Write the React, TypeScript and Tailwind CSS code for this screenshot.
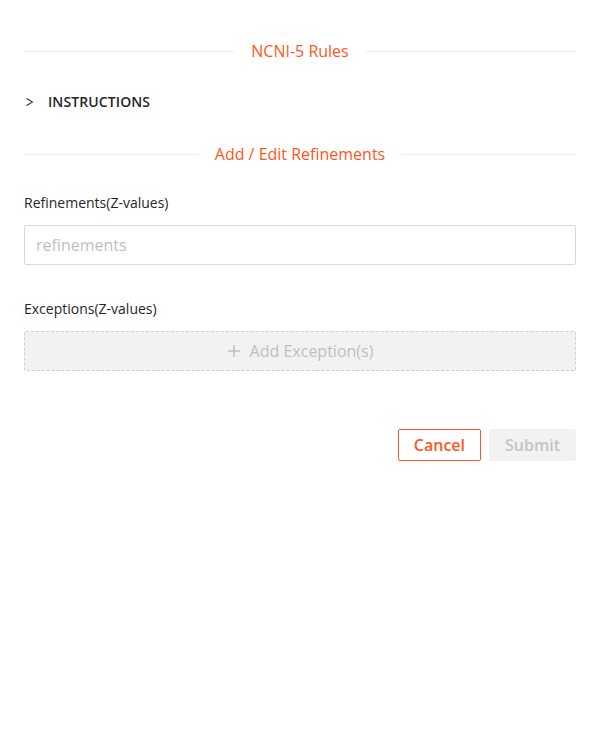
import React from "react";

function Divider({ title }: { title: string }) {
  return (
    <div className="flex items-center">
      <div className="flex-1 h-px bg-[#f0f0f0]" />
      <span className="px-4 text-[16px] leading-6 text-[#ff5722]">{title}</span>
      <div className="flex-1 h-px bg-[#f0f0f0]" />
    </div>
  );
}

export default function App() {
  return (
    <div className="bg-white w-full min-h-[731px] pl-6 pr-5 pt-[39px] text-[rgba(0,0,0,0.85)]" style={{ fontFamily: '"Open Sans", sans-serif' }}>
      <Divider title="NCNI-5 Rules" />
      <div className="flex items-center mt-[26px] h-[24px]">
        <svg width="12" height="12" viewBox="0 0 12 12" className="ml-0 mr-[12px] mt-[2px]" fill="none" stroke="#333" strokeWidth="1.1">
          <path d="M2.5 2.5 L8.5 6 L2.5 9.5" />
        </svg>
        <span className="text-[14px] font-semibold text-[#262626] tracking-[0.1px]">INSTRUCTIONS</span>
      </div>
      <div className="mt-[29px]">
        <Divider title="Add / Edit Refinements" />
      </div>
      <div className="mt-[26px] text-[14px] leading-[22px] text-[#262626]">Refinements(Z-values)</div>
      <input
        placeholder="refinements"
        className="mt-[11px] w-full h-[40px] border border-[#d9d9d9] rounded-[2px] px-[11px] text-[16px] placeholder:text-[#bfbfbf] outline-none"
      />
      <div className="mt-[33px] text-[14px] leading-[22px] text-[#262626]">Exceptions(Z-values)</div>
      <div className="mt-[11px] h-[40px] border border-dashed border-[#d0d0d0] bg-[#f2f2f2] rounded-[2px] flex items-center justify-center text-[16px] text-[#bfbfbf]">
        <svg width="14" height="14" viewBox="0 0 14 14" className="mr-[9px]" stroke="#bfbfbf" strokeWidth="1.5">
          <path d="M7 1 V13 M1 7 H13" />
        </svg>
        <span>Add Exception(s)</span>
      </div>
      <div className="flex justify-end gap-2 mt-[58px]">
        <button className="h-[32px] px-[15px] border border-[#ff5722] rounded-[2px] text-[#ff5722] text-[16px] font-semibold bg-white">Cancel</button>
        <button className="h-[32px] px-[15px] border border-[#f2f2f2] rounded-[2px] text-[#c4c4c4] text-[16px] font-semibold bg-[#f2f2f2]">Submit</button>
      </div>
    </div>
  );
}
